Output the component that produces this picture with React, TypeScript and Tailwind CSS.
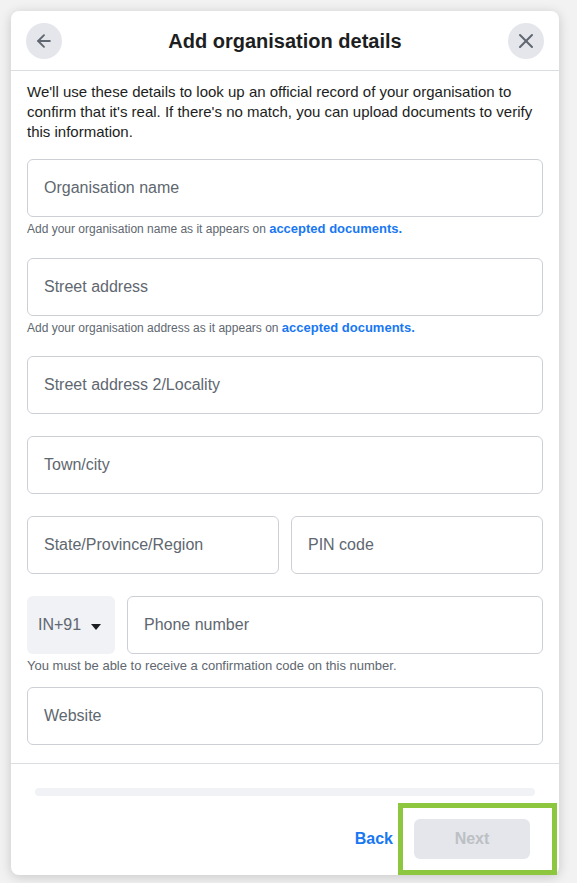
import React from 'react';
import { ArrowLeft, X } from 'lucide-react';

const font = { fontFamily: '"Liberation Sans", Arial, Helvetica, sans-serif' };

function Field({ placeholder, className = '' }: { placeholder: string; className?: string }) {
  return (
    <div
      className={`h-[58px] flex items-center px-4 rounded-md border border-[#ccd0d5] bg-white text-[16px] text-[#606770] ${className}`}
    >
      {placeholder}
    </div>
  );
}

function Helper({ children, className = 'text-[12px]' }: { children: React.ReactNode; className?: string }) {
  return <p className={`mt-[4px] leading-4 text-[#606770] ${className}`}>{children}</p>;
}

const DocsLink = () => <span className="font-bold text-[13px] text-[#1877f2]">accepted documents.</span>;

export default function App() {
  return (
    <div className="min-h-[883px] bg-[#f2f2f2] pt-[11px] pl-[11px]" style={font}>
      <div className="relative w-[548px] h-[864px] bg-white rounded-lg shadow-[0_2px_12px_rgba(0,0,0,0.18)] flex flex-col">
        {/* Header */}
        <div className="h-[60px] flex items-center justify-between px-[15px] border-b border-[#dadde1]">
          <button className="w-9 h-9 rounded-full bg-[#e4e6eb] flex items-center justify-center">
            <ArrowLeft className="w-5 h-5 text-[#606770]" strokeWidth={2.25} />
          </button>
          <h2 className="text-[20px] font-bold text-[#1c1e21]">Add organisation details</h2>
          <button className="w-9 h-9 rounded-full bg-[#e4e6eb] flex items-center justify-center">
            <X className="w-6 h-6 text-[#606770]" strokeWidth={2} />
          </button>
        </div>

        {/* Body */}
        <div className="px-4 pt-[11px] pb-[18px] border-b border-[#dadde1]">
          <p className="text-[15px] leading-5 text-[#1c1e21] mb-[17px]">
            We'll use these details to look up an official record of your organisation to confirm that it's real. If
            there's no match, you can upload documents to verify this information.
          </p>

          <Field placeholder="Organisation name" />
          <Helper>
            Add your organisation name as it appears on <DocsLink />
          </Helper>

          <Field placeholder="Street address" className="mt-[21px]" />
          <Helper>
            Add your organisation address as it appears on <DocsLink />
          </Helper>

          <Field placeholder="Street address 2/Locality" className="mt-[20px]" />
          <Field placeholder="Town/city" className="mt-[22px]" />

          <div className="mt-[22px] flex gap-3">
            <Field placeholder="State/Province/Region" className="flex-1" />
            <Field placeholder="PIN code" className="flex-1" />
          </div>

          <div className="mt-[22px] flex gap-3">
            <div className="w-[88px] h-[58px] rounded-md bg-[#f0f2f5] flex items-center pl-[11px] gap-[10px] text-[16px] text-[#606770]">
              IN+91
              <span className="w-0 h-0 border-l-[5px] border-r-[5px] border-t-[6px] border-l-transparent border-r-transparent border-t-[#1c1e21] mt-[3px]" />
            </div>
            <Field placeholder="Phone number" className="flex-1" />
          </div>
          <Helper className="text-[13px]">You must be able to receive a confirmation code on this number.</Helper>

          <Field placeholder="Website" className="mt-[13px]" />
        </div>

        {/* Footer */}
        <div className="flex-1 flex flex-col px-6 pt-6">
          <div className="h-2 rounded-full bg-[#f0f2f5]" />
          <div className="mt-auto mb-4 flex items-center justify-end gap-[21px] pr-[5px]">
            <span className="text-[16px] font-bold text-[#1877f2]">Back</span>
            <button className="w-[116px] h-10 rounded-md bg-[#e4e6eb] text-[16px] font-bold text-[#bcc0c4]">Next</button>
          </div>
        </div>

        {/* highlight annotation */}
        <div className="absolute left-[387px] top-[792px] w-[159px] h-[72px] border-[5px] border-[#8dc63f] pointer-events-none" />
      </div>
    </div>
  );
}
